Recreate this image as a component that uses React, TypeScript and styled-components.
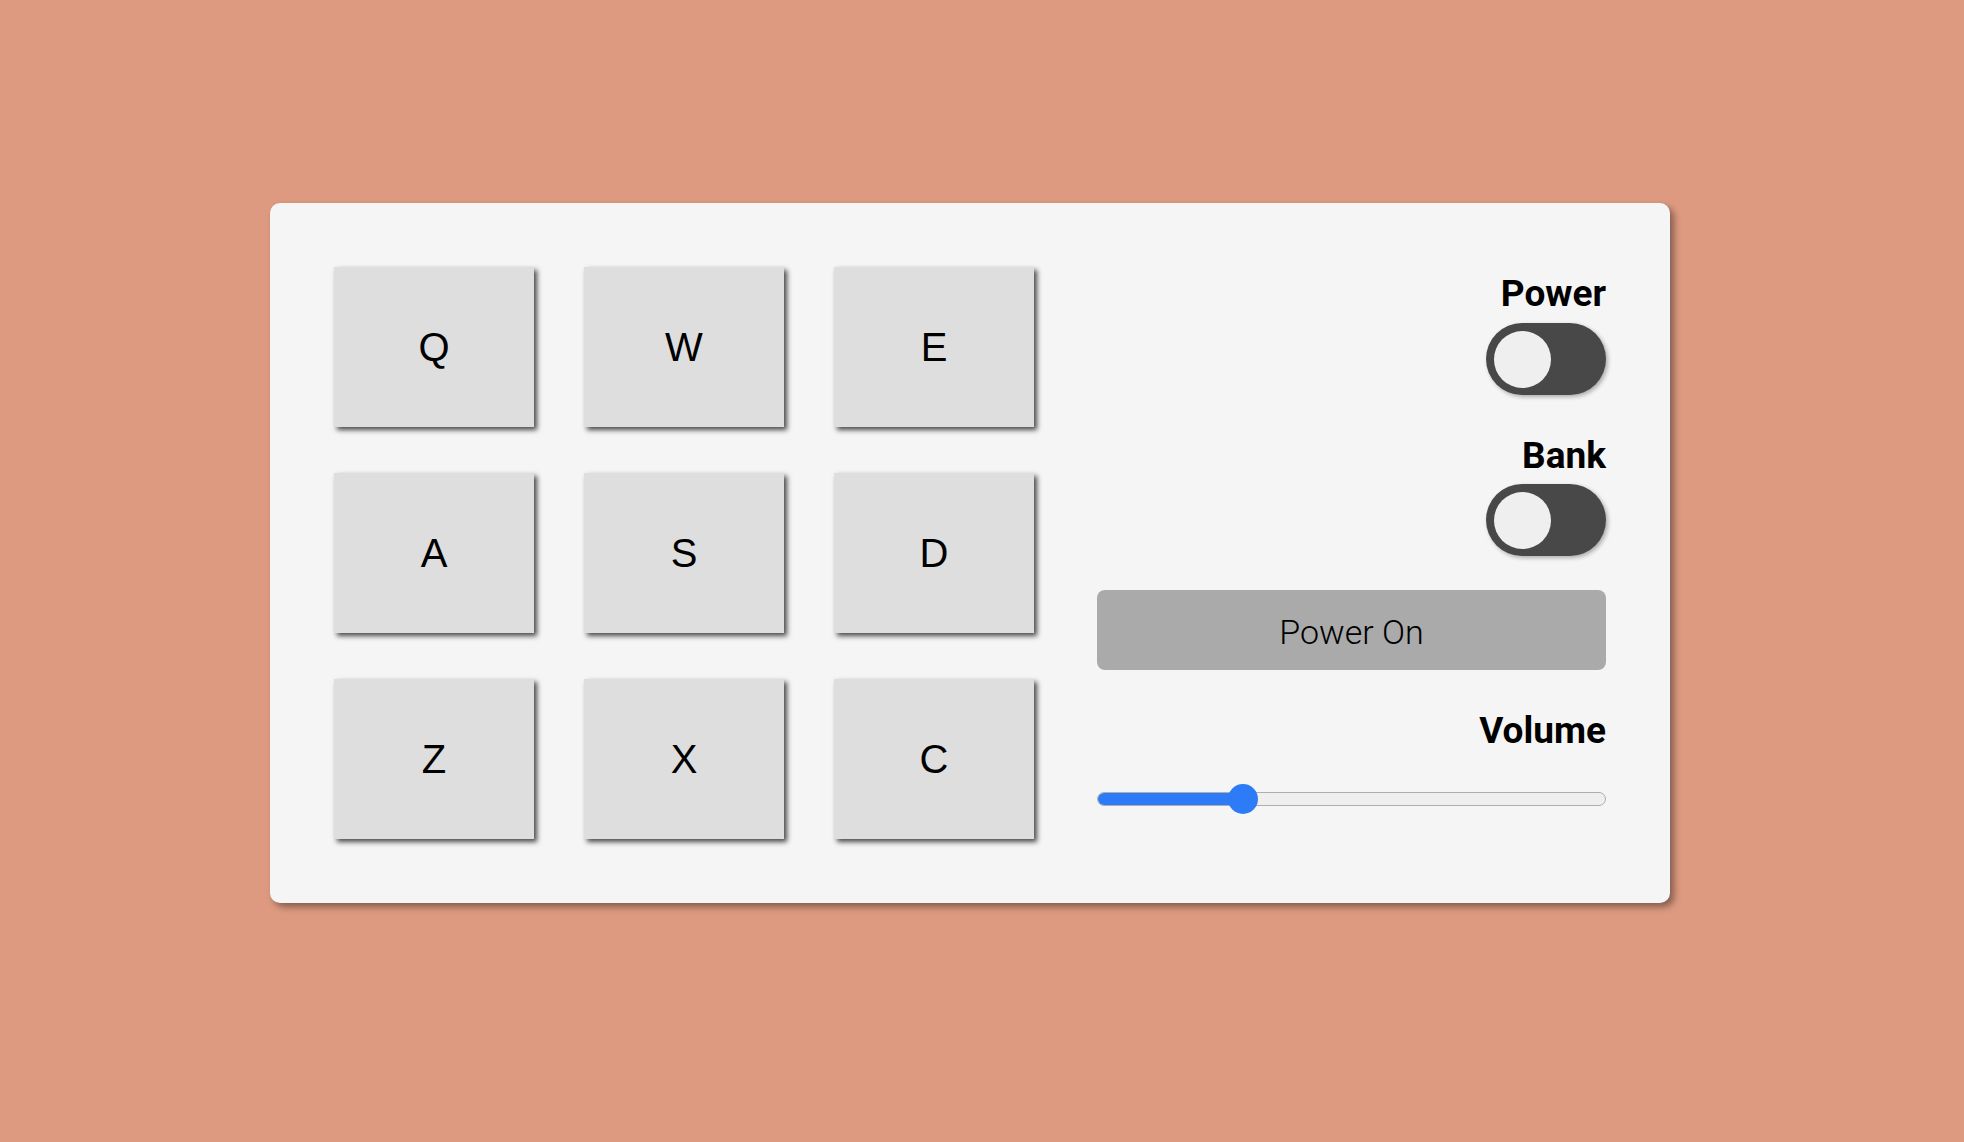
import React, { useState } from "react";
import styled, { createGlobalStyle } from "styled-components";

const GlobalStyle = createGlobalStyle`
  html, body {
    margin: 0;
    padding: 0;
    background: #dd9a80;
  }
  * { box-sizing: border-box; }
`;

const Page = styled.div`
  min-height: 100vh;
  background: #dd9a80;
  padding: 203px 0 0 270px;
  display: flex;
  align-items: flex-start;
`;

const Machine = styled.div`
  width: 1400px;
  height: 700px;
  background: #f5f5f5;
  border-radius: 10px;
  box-shadow: 4px 4px 7px rgba(0, 0, 0, 0.4);
  padding: 64px;
  display: flex;
  gap: 63px;
`;

const PadGrid = styled.div`
  display: grid;
  grid-template-columns: repeat(3, 200px);
  grid-template-rows: repeat(3, 160px);
  column-gap: 50px;
  row-gap: 46px;
`;

const Pad = styled.button`
  width: 200px;
  height: 160px;
  border: none;
  border-radius: 0;
  padding: 0;
  background: #dedede;
  box-shadow: 3px 3px 5px rgba(0, 0, 0, 0.7);
  font-family: "Liberation Sans", Arial, sans-serif;
  font-size: 40px;
  color: #000;
  display: flex;
  align-items: center;
  justify-content: center;
  cursor: pointer;
`;

const Controls = styled.div`
  width: 509px;
  padding-top: 8px;
  display: flex;
  flex-direction: column;
  align-items: flex-end;
`;

const Label = styled.div<{ $top?: number; $bottom?: number }>`
  font-family: Roboto, "Liberation Sans", sans-serif;
  font-weight: 700;
  font-size: 37px;
  line-height: 37px;
  color: #000;
  margin-top: ${(p) => p.$top ?? 0}px;
  margin-bottom: ${(p) => p.$bottom ?? 0}px;
`;

const Toggle = styled.button`
  width: 120px;
  height: 72px;
  border: none;
  padding: 0 0 0 8px;
  border-radius: 36px;
  background: #484848;
  box-shadow: 2px 2px 4px rgba(0, 0, 0, 0.3);
  display: flex;
  align-items: center;
  cursor: pointer;
`;

const Knob = styled.span`
  width: 57px;
  height: 57px;
  border-radius: 50%;
  background: #efefef;
`;

const Display = styled.div`
  width: 100%;
  height: 80px;
  margin-top: 34px;
  padding-top: 3px;
  border-radius: 8px;
  background: #aaaaaa;
  display: flex;
  align-items: center;
  justify-content: center;
  font-family: Roboto, "Liberation Sans", sans-serif;
  font-weight: 300;
  font-size: 34px;
  color: #000;
`;

const Slider = styled.div`
  position: relative;
  width: 100%;
  height: 30px;
  margin-top: 35px;
  display: flex;
  align-items: center;
`;

const Track = styled.div`
  width: 100%;
  height: 14px;
  border-radius: 7px;
  background: #efefef;
  border: 1px solid #aeaeae;
  overflow: hidden;
  display: flex;
`;

const Fill = styled.div`
  height: 100%;
  background: #2d7bf6;
`;

const Thumb = styled.div`
  position: absolute;
  top: 0;
  width: 30px;
  height: 30px;
  margin-left: -15px;
  border-radius: 50%;
  background: #2d7bf6;
`;

const keys = ["Q", "W", "E", "A", "S", "D", "Z", "X", "C"];

export default function App() {
  const [volume] = useState(0.287);
  const pct = `${volume * 100}%`;
  return (
    <>
      <GlobalStyle />
      <Page>
        <Machine>
          <PadGrid>
            {keys.map((k) => (
              <Pad key={k}>{k}</Pad>
            ))}
          </PadGrid>
          <Controls>
            <Label $bottom={11}>Power</Label>
            <Toggle aria-label="Power">
              <Knob />
            </Toggle>
            <Label $top={42} $bottom={10}>
              Bank
            </Label>
            <Toggle aria-label="Bank">
              <Knob />
            </Toggle>
            <Display>Power On</Display>
            <Label $top={42}>Volume</Label>
            <Slider>
              <Track>
                <Fill style={{ width: pct }} />
              </Track>
              <Thumb style={{ left: pct }} />
            </Slider>
          </Controls>
        </Machine>
      </Page>
    </>
  );
}
